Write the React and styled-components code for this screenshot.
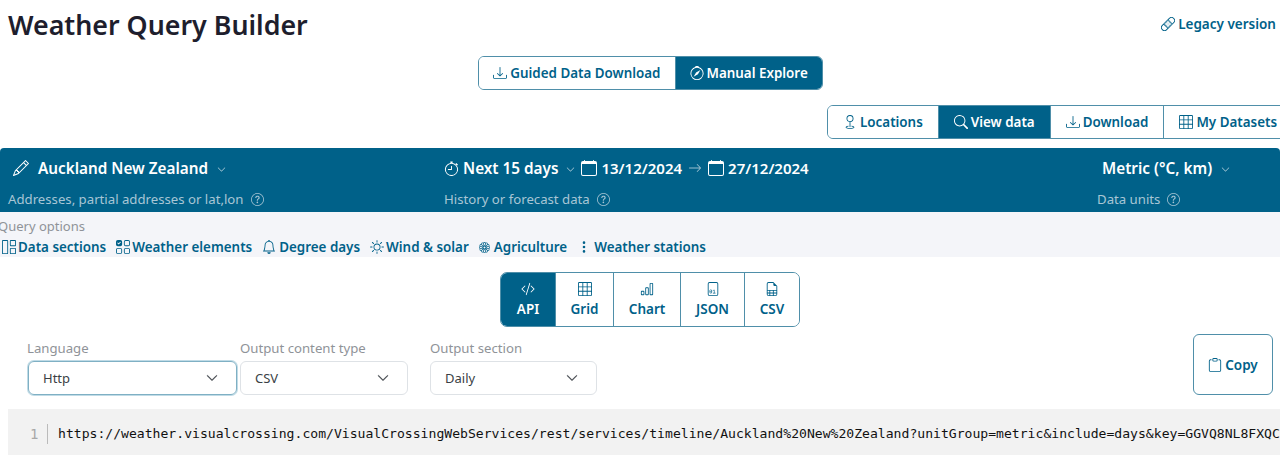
import React from "react";
import styled, { createGlobalStyle } from "styled-components";
import {
  BsBandaid,
  BsBarChart,
  BsBell,
  BsCalendar,
  BsArrowRight,
  BsChevronDown,
  BsClipboard,
  BsCodeSlash,
  BsCompass,
  BsDownload,
  BsFileBinary,
  BsFileEarmarkSpreadsheet,
  BsFlower1,
  BsGeo,
  BsGrid1X2,
  BsGrid3X3,
  BsPencil,
  BsQuestionCircle,
  BsSearch,
  BsStopwatch,
  BsSun,
  BsThreeDotsVertical,
  BsUiChecksGrid,
} from "react-icons/bs";

const BLUE = "#006189";

const GlobalStyle = createGlobalStyle`
  html, body {
    margin: 0;
    height: 455px;
    overflow: hidden;
    background: #fff;
  }
  body {
    font-family: "Noto Sans", sans-serif;
    font-size: 14px;
    color: ${BLUE};
  }
`;

const Page = styled.div`
  width: 1280px;
  height: 455px;
  overflow: hidden;
`;

const Header = styled.div`
  height: 56px;
  display: flex;
  justify-content: space-between;
  padding: 0 4px 0 8px;
`;

const Title = styled.h1`
  margin: 6px 0 0;
  font-size: 26.8px;
  line-height: 38px;
  font-weight: 600;
  color: #1e1e2d;
`;

const LegacyLink = styled.a`
  height: 20px;
  margin-top: 14px;
  display: flex;
  align-items: center;
  gap: 3px;
  font-size: 13.5px;
  font-weight: 600;
  color: ${BLUE};

  svg {
    font-size: 14px;
  }
`;

const ModeRow = styled.div`
  display: flex;
  justify-content: center;
  padding-left: 21px;
`;

const Segments = styled.div`
  display: flex;
  border: 1px solid #4f8fa9;
  border-radius: 6px;
  overflow: hidden;
  background: #fff;
`;

const Segment = styled.div`
  display: flex;
  align-items: center;
  gap: 3px;
  height: 32px;
  padding: 0 ${(p) => p.$pad || 14}px;
  font-size: 13.4px;
  font-weight: 600;
  white-space: nowrap;
  background: ${(p) => (p.$active ? BLUE : "#fff")};
  color: ${(p) => (p.$active ? "#fff" : BLUE)};

  & + & {
    border-left: 1px solid #4f8fa9;
  }

  svg {
    font-size: 14px;
  }
`;

const TabRow = styled.div`
  display: flex;
  margin: 15px 0 9px 827px;
  width: 470px;
`;

const QueryBar = styled.div`
  height: 64px;
  box-sizing: border-box;
  background: ${BLUE};
  border-radius: 4px 4px 0 0;
  display: grid;
  grid-template-columns: 444px 653px 1fr;
  color: #fff;
`;

const QueryField = styled.div`
  display: flex;
  flex-direction: column;
  padding-left: ${(p) => p.$inset || 0}px;
`;

const QueryValue = styled.div`
  height: 40px;
  display: flex;
  align-items: center;
  gap: ${(p) => p.$gap || 4}px;
  padding-left: ${(p) => p.$indent || 0}px;
  font-size: 15.3px;
  font-weight: 600;
  white-space: nowrap;
`;

const DateText = styled.span`
  font-size: 15px;
`;

const ValueIcon = styled.span`
  display: flex;
  font-size: ${(p) => p.$size || 15}px;
  margin: ${(p) => p.$margin || "0"};
  opacity: ${(p) => p.$opacity || 1};
`;

const QueryHint = styled.div`
  display: flex;
  align-items: center;
  gap: 7px;
  margin-top: 2px;
  font-size: 13.2px;
  line-height: 18px;
  color: #a8c6d5;

  svg {
    font-size: 13px;
  }
`;

const OptionsBar = styled.div`
  height: 45px;
  background: #f4f5f9;
`;

const OptionsTitle = styled.div`
  margin-left: -2px;
  padding-top: 6px;
  font-size: 13px;
  line-height: 17px;
  color: #8f9398;
`;

const OptionsList = styled.div`
  display: flex;
  gap: 10px;
  margin-top: 3px;
  padding-left: 2px;
`;

const OptionLink = styled.div`
  display: flex;
  align-items: center;
  gap: 2px;
  font-size: 13.4px;
  line-height: 18px;
  font-weight: 600;
  white-space: nowrap;

  svg {
    font-size: ${(p) => p.$icon || 14}px;
    margin-right: ${(p) => p.$iconGap || 0}px;
  }
`;

const OutputRow = styled.div`
  display: flex;
  justify-content: center;
  margin-top: 15px;
  padding-left: 20px;
`;

const OutputTabs = styled(Segments)`
  border-radius: 7px;
`;

const OutputTab = styled.div`
  box-sizing: border-box;
  width: ${(p) => p.$width}px;
  height: 53px;
  display: flex;
  flex-direction: column;
  align-items: center;
  justify-content: center;
  gap: 4px;
  padding-top: 1px;
  font-size: 13.5px;
  line-height: 18px;
  font-weight: 600;
  background: ${(p) => (p.$active ? BLUE : "#fff")};
  color: ${(p) => (p.$active ? "#fff" : BLUE)};

  & + & {
    border-left: 1px solid #4f8fa9;
  }

  svg {
    font-size: 14px;
  }
`;

const ControlsRow = styled.div`
  height: 61px;
  margin: 7px 7px 14px 28px;
  display: flex;
  align-items: flex-end;
`;

const Field = styled.div`
  width: ${(p) => p.$width}px;
  margin-right: ${(p) => p.$gap}px;
`;

const FieldLabel = styled.div`
  margin: 0 0 4px ${(p) => p.$shift || 0}px;
  font-size: 13.2px;
  line-height: 18px;
  color: #8f9398;
`;

const Select = styled.div`
  box-sizing: border-box;
  height: 34px;
  display: flex;
  align-items: center;
  justify-content: space-between;
  padding: 0 18px 0 14px;
  border: 1px solid ${(p) => (p.$focus ? "#7fb0c4" : "#dee2e6")};
  border-radius: 6px;
  font-size: 13px;
  color: #3a3f45;
  box-shadow: ${(p) => (p.$focus ? "0 0 0 1px #c0dbe6" : "none")};

  svg {
    font-size: 12px;
    stroke-width: 0.6;
  }
`;

const CopyButton = styled.div`
  box-sizing: border-box;
  width: 80px;
  height: 61px;
  margin-left: auto;
  display: flex;
  align-items: center;
  justify-content: center;
  gap: 3px;
  border: 1px solid #4f8fa9;
  border-radius: 6px;
  font-size: 13.5px;
  font-weight: 600;

  svg {
    font-size: 14px;
  }
`;

const CodeBlock = styled.div`
  margin-left: 8px;
  height: 46px;
  padding-top: 4px;
  box-sizing: border-box;
  display: flex;
  align-items: center;
  background: #f2f2f2;
  overflow: hidden;
`;

const LineNumber = styled.div`
  flex: none;
  width: 40px;
  height: 20px;
  margin-right: 8px;
  border-right: 1px solid #bbb;
  box-sizing: border-box;
  padding-left: 22px;
  font-family: "DejaVu Sans Mono", monospace;
  font-size: 14px;
  line-height: 20px;
  color: #a8a8a8;
`;

const CodeLine = styled.div`
  margin-left: 2px;
  font-family: "DejaVu Sans Mono", monospace;
  font-size: 13.1px;
  line-height: 20px;
  color: #111;
  white-space: nowrap;
`;

const url =
  "https://weather.visualcrossing.com/VisualCrossingWebServices/rest/services/timeline/Auckland%20New%20Zealand?unitGroup=metric&include=days&key=GGVQ8NL8FXQC";

const App = () => {
  return (
    <Page>
      <GlobalStyle />
      <Header>
        <Title>Weather Query Builder</Title>
        <LegacyLink>
          <BsBandaid />
          Legacy version
        </LegacyLink>
      </Header>

      <ModeRow>
        <Segments>
          <Segment>
            <BsDownload />
            Guided Data Download
          </Segment>
          <Segment $active>
            <BsCompass />
            Manual Explore
          </Segment>
        </Segments>
      </ModeRow>

      <TabRow>
        <Segments>
          <Segment $pad={15}>
            <BsGeo />
            Locations
          </Segment>
          <Segment $pad={15} $active>
            <BsSearch />
            View data
          </Segment>
          <Segment $pad={15}>
            <BsDownload />
            Download
          </Segment>
          <Segment $pad={15}>
            <BsGrid3X3 />
            My Datasets
          </Segment>
        </Segments>
      </TabRow>

      <QueryBar>
        <QueryField $inset={8}>
          <QueryValue $indent={5}>
            <ValueIcon $size={16} $margin="0 5px 0 0">
              <BsPencil />
            </ValueIcon>
            Auckland New Zealand
            <ValueIcon $size={9} $margin="2px 0 0 5px" $opacity={0.7}>
              <BsChevronDown />
            </ValueIcon>
          </QueryValue>
          <QueryHint>
            Addresses, partial addresses or lat,lon
            <BsQuestionCircle />
          </QueryHint>
        </QueryField>
        <QueryField>
          <QueryValue>
            <ValueIcon>
              <BsStopwatch />
            </ValueIcon>
            Next 15 days
            <ValueIcon $size={9} $margin="2px 2px 0 4px" $opacity={0.7}>
              <BsChevronDown />
            </ValueIcon>
            <ValueIcon $size={16}>
              <BsCalendar />
            </ValueIcon>
            <DateText>13/12/2024</DateText>
            <ValueIcon $size={14} $margin="0 2px" $opacity={0.6}>
              <BsArrowRight />
            </ValueIcon>
            <ValueIcon $size={16}>
              <BsCalendar />
            </ValueIcon>
            <DateText>27/12/2024</DateText>
          </QueryValue>
          <QueryHint>
            History or forecast data
            <BsQuestionCircle />
          </QueryHint>
        </QueryField>
        <QueryField>
          <QueryValue $indent={5}>
            Metric (°C, km)
            <ValueIcon $size={9} $margin="2px 0 0 5px" $opacity={0.7}>
              <BsChevronDown />
            </ValueIcon>
          </QueryValue>
          <QueryHint>
            Data units
            <BsQuestionCircle />
          </QueryHint>
        </QueryField>
      </QueryBar>

      <OptionsBar>
        <OptionsTitle>Query options</OptionsTitle>
        <OptionsList>
          <OptionLink>
            <BsGrid1X2 />
            Data sections
          </OptionLink>
          <OptionLink>
            <BsUiChecksGrid />
            Weather elements
          </OptionLink>
          <OptionLink $iconGap={1}>
            <BsBell />
            Degree days
          </OptionLink>
          <OptionLink>
            <BsSun />
            Wind &amp; solar
          </OptionLink>
          <OptionLink $icon={11} $iconGap={2}>
            <BsFlower1 />
            Agriculture
          </OptionLink>
          <OptionLink $iconGap={1}>
            <BsThreeDotsVertical />
            Weather stations
          </OptionLink>
        </OptionsList>
      </OptionsBar>

      <OutputRow>
        <OutputTabs>
          <OutputTab $width={54} $active>
            <BsCodeSlash />
            API
          </OutputTab>
          <OutputTab $width={58}>
            <BsGrid3X3 />
            Grid
          </OutputTab>
          <OutputTab $width={67}>
            <BsBarChart />
            Chart
          </OutputTab>
          <OutputTab $width={64}>
            <BsFileBinary />
            JSON
          </OutputTab>
          <OutputTab $width={55}>
            <BsFileEarmarkSpreadsheet />
            CSV
          </OutputTab>
        </OutputTabs>
      </OutputRow>

      <ControlsRow>
        <Field $width={209} $gap={3}>
          <FieldLabel $shift={-1}>Language</FieldLabel>
          <Select $focus>
            Http
            <BsChevronDown />
          </Select>
        </Field>
        <Field $width={168} $gap={22}>
          <FieldLabel>Output content type</FieldLabel>
          <Select>
            CSV
            <BsChevronDown />
          </Select>
        </Field>
        <Field $width={167}>
          <FieldLabel>Output section</FieldLabel>
          <Select>
            Daily
            <BsChevronDown />
          </Select>
        </Field>
        <CopyButton>
          <BsClipboard />
          Copy
        </CopyButton>
      </ControlsRow>

      <CodeBlock>
        <LineNumber>1</LineNumber>
        <CodeLine>{url}</CodeLine>
      </CodeBlock>
    </Page>
  );
};

export default App;
